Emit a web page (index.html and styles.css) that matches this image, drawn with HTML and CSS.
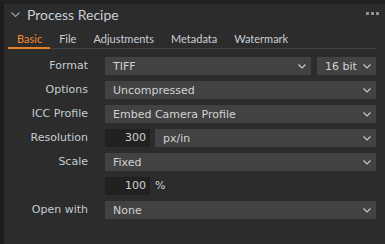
FILE: index.html
```html
<!DOCTYPE html>
<html lang="en">

<head>
    <meta charset="UTF-8">
    <meta name="viewport" content="width=device-width, initial-scale=1.0">
    <title>Process Recipe</title>
    <link rel="stylesheet" href="styles.css">
</head>

<body>
    <div class="panel">
        <!-- Cabeçalho -->
        <div class="header">
            <svg class="caret" width="9" height="6" viewBox="0 0 9 6"><polyline points="0.5,0.5 4.5,4.5 8.5,0.5" fill="none" stroke="#9aa0a6" stroke-width="1.2"/></svg>
            <span class="title">Process Recipe</span>
            <span class="more">
                <span class="dot"></span><span class="dot"></span><span class="dot"></span>
            </span>
        </div>

        <!-- Abas -->
        <div class="tabs">
            <div class="tab active">Basic</div>
            <div class="tab">File</div>
            <div class="tab">Adjustments</div>
            <div class="tab">Metadata</div>
            <div class="tab">Watermark</div>
        </div>

        <!-- Formulário -->
        <div class="form">
            <label>Format</label>
            <div class="field">
                <div class="select grow">TIFF<svg class="chev" width="8" height="5" viewBox="0 0 8 5"><polyline points="0.5,0.5 4,4 7.5,0.5" fill="none" stroke="#c8c8c8" stroke-width="1.2"/></svg></div>
                <div class="select bits">16 bit<svg class="chev" width="8" height="5" viewBox="0 0 8 5"><polyline points="0.5,0.5 4,4 7.5,0.5" fill="none" stroke="#c8c8c8" stroke-width="1.2"/></svg></div>
            </div>

            <label>Options</label>
            <div class="field">
                <div class="select grow">Uncompressed<svg class="chev" width="8" height="5" viewBox="0 0 8 5"><polyline points="0.5,0.5 4,4 7.5,0.5" fill="none" stroke="#c8c8c8" stroke-width="1.2"/></svg></div>
            </div>

            <label>ICC Profile</label>
            <div class="field">
                <div class="select grow">Embed Camera Profile<svg class="chev" width="8" height="5" viewBox="0 0 8 5"><polyline points="0.5,0.5 4,4 7.5,0.5" fill="none" stroke="#c8c8c8" stroke-width="1.2"/></svg></div>
            </div>

            <label>Resolution</label>
            <div class="field">
                <div class="number">300</div>
                <div class="select grow">px/in<svg class="chev" width="8" height="5" viewBox="0 0 8 5"><polyline points="0.5,0.5 4,4 7.5,0.5" fill="none" stroke="#c8c8c8" stroke-width="1.2"/></svg></div>
            </div>

            <label>Scale</label>
            <div class="field">
                <div class="select grow">Fixed<svg class="chev" width="8" height="5" viewBox="0 0 8 5"><polyline points="0.5,0.5 4,4 7.5,0.5" fill="none" stroke="#c8c8c8" stroke-width="1.2"/></svg></div>
            </div>

            <label></label>
            <div class="field">
                <div class="number">100</div>
                <span class="unit">%</span>
            </div>

            <label>Open with</label>
            <div class="field">
                <div class="select grow">None<svg class="chev" width="8" height="5" viewBox="0 0 8 5"><polyline points="0.5,0.5 4,4 7.5,0.5" fill="none" stroke="#c8c8c8" stroke-width="1.2"/></svg></div>
            </div>
        </div>
    </div>
</body>

</html>
```

FILE: styles.css
```css
/* Reset */
* {
    margin: 0;
    padding: 0;
    box-sizing: border-box;
    font-family: 'Lato', 'Noto Sans', sans-serif;
}

body {
    background-color: #2c2c2c;
    width: 385px;
    height: 244px;
    overflow: hidden;
}

.panel {
    height: 244px;
    background-color: #2c2c2c;
    border-top: 4px solid #222;
    border-left: 4px solid #1d1d1d;
}

/* Cabeçalho */
.header {
    display: flex;
    align-items: center;
    height: 21px;
    padding-left: 7px;
    padding-right: 6px;
}

.caret {
    margin-right: 7px;
}

.title {
    font-size: 14px;
    color: #c9cfd6;
    flex: 1;
}

.more {
    display: flex;
    gap: 2px;
    margin-top: -2px;
}

.dot {
    width: 3px;
    height: 3px;
    background-color: #8e8e8e;
}

/* Abas */
.tabs {
    display: flex;
    margin-left: 4px;
    margin-right: 9px;
    margin-top: 1px;
    border-bottom: 1px solid #444;
}

.tab {
    font-size: 11px;
    line-height: 15px;
    color: #c9cfd6;
    padding: 5px 8px 1px 9px;
    border-bottom: 2px solid transparent;
    margin-bottom: -1px;
}

.tab.active {
    color: #f28a2e;
    border-bottom-color: #e8802a;
}

/* Formulário */
.form {
    display: grid;
    grid-template-columns: 84px 271px;
    column-gap: 17px;
    row-gap: 6px;
    padding-top: 8px;
}

.form label,
.select,
.number,
.unit {
    font-family: 'DejaVu Sans', sans-serif;
    font-size: 11px;
}

.form label {
    color: #c5ccd3;
    text-align: right;
    line-height: 18px;
}

.field {
    display: flex;
    gap: 6px;
    height: 18px;
}

.select {
    display: flex;
    align-items: center;
    justify-content: space-between;
    background-color: #424242;
    color: #d2d2d2;
    padding: 0 5px 0 8px;
    height: 18px;
}

.grow {
    flex: 1;
}

.bits {
    width: 59px;
}

.number {
    width: 45px;
    background-color: #212121;
    color: #d2d2d2;
    text-align: right;
    padding-right: 4px;
    line-height: 18px;
    margin-right: -1px;
}

.unit {
    color: #d2d2d2;
    line-height: 18px;
}
```
